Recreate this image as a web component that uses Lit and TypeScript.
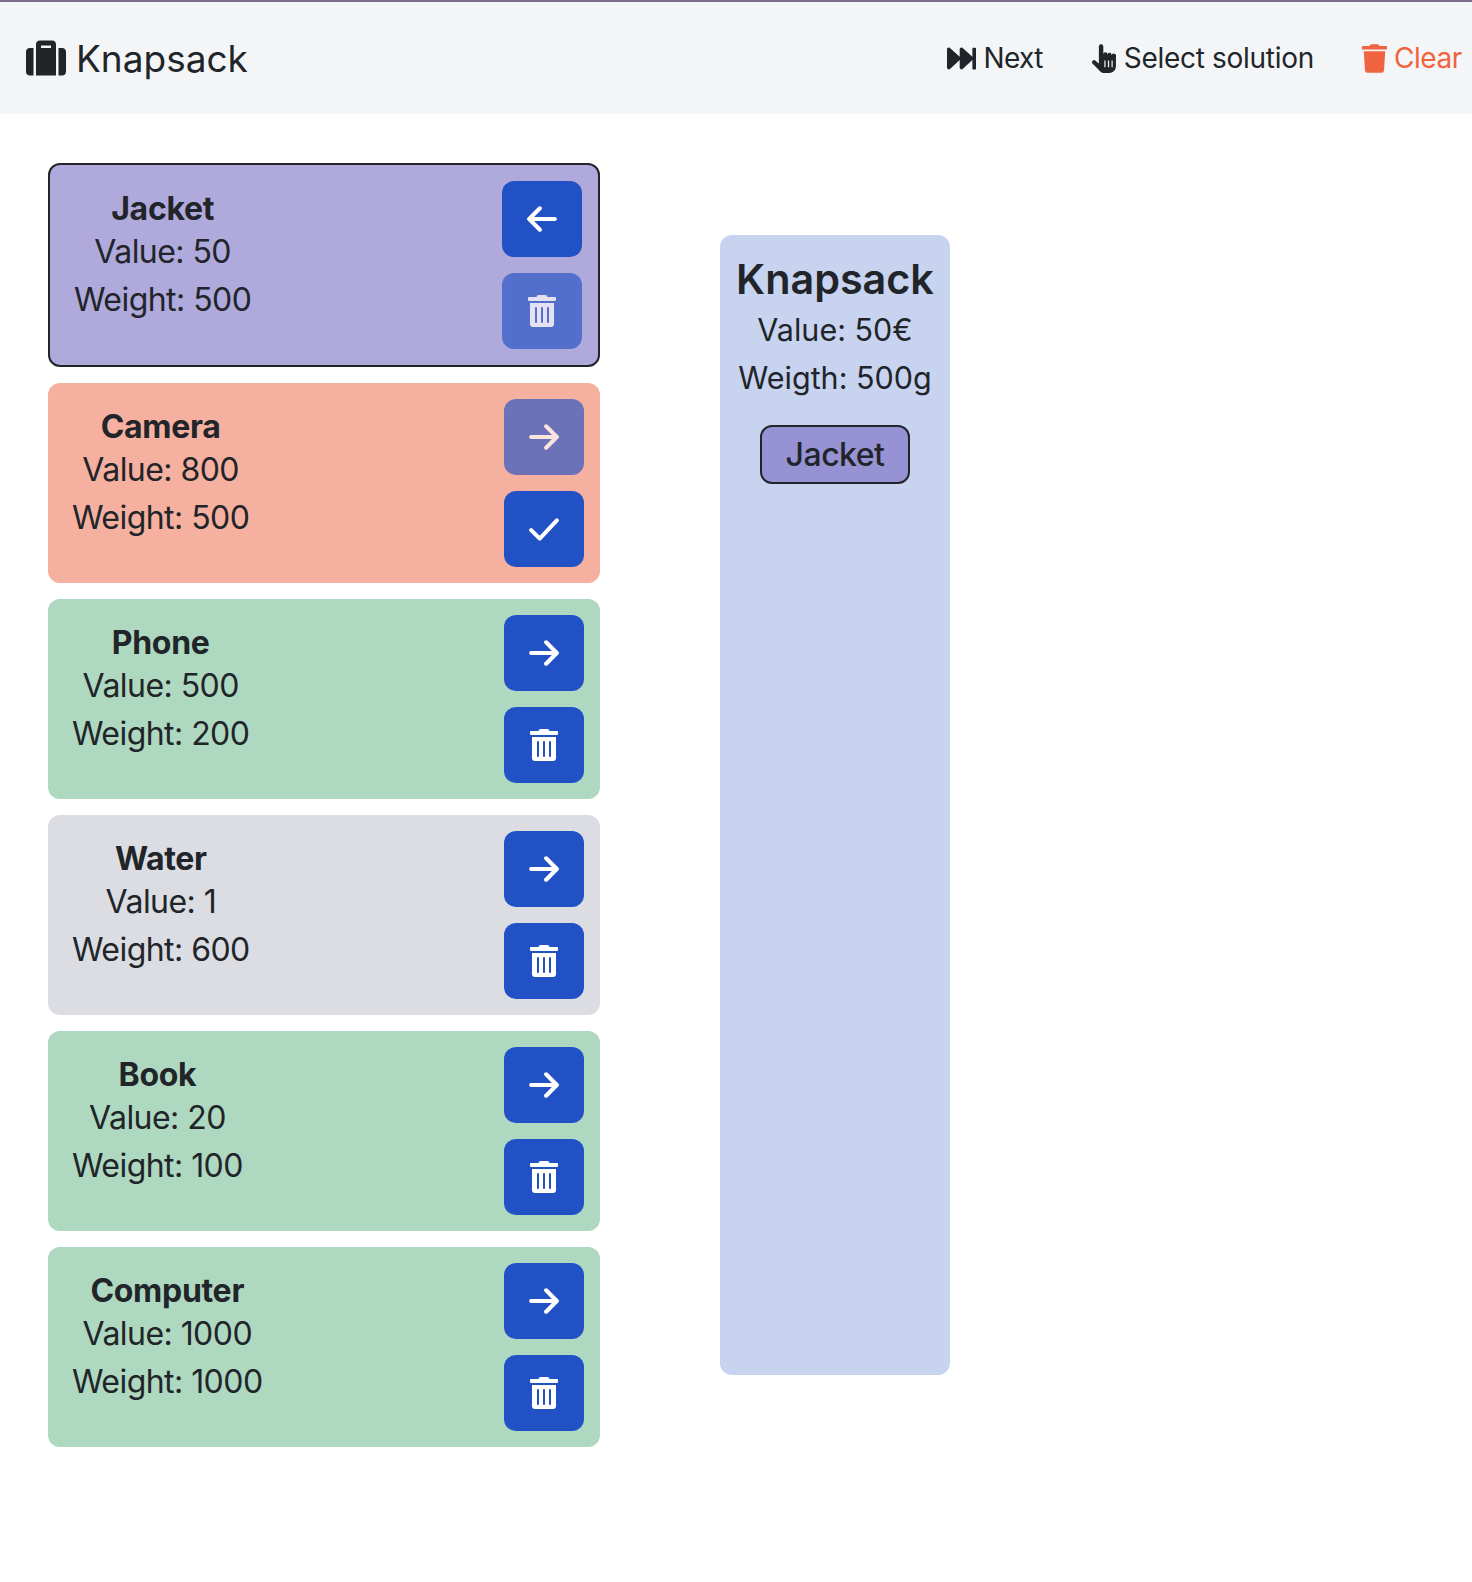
import { LitElement, html, css, svg } from "lit";
import { customElement } from "lit/decorators.js";

const icons = {
  suitcase: svg`<path d="M128 480h256V80c0-26.5-21.5-48-48-48H176c-26.5 0-48 21.5-48 48v400zm64-384h128v32H192V96zm320 80v256c0 26.5-21.5 48-48 48h-48V128h48c26.5 0 48 21.5 48 48zM96 480H48c-26.5 0-48-21.5-48-48V176c0-26.5 21.5-48 48-48h48v352z"/>`,
  next: svg`<path d="M512 76v360c0 6.6-5.4 12-12 12h-40c-6.6 0-12-5.4-12-12V284.1L276.5 440.6c-20.6 17.2-52.5 2.8-52.5-24.6V284.1L52.5 440.6C31.9 457.8 0 443.4 0 416V96c0-27.4 31.9-41.7 52.5-24.6L224 226.8V96c0-27.4 31.9-41.7 52.5-24.6L448 226.8V76c0-6.6 5.4-12 12-12h40c6.6 0 12 5.4 12 12z"/>`,
  // pointing hand, redrawn from the reference: thin index finger, blob palm, three slits
  hand: svg`<path fill-rule="evenodd" d="M20 7a6.5 6.5 0 0 1 13 0V30a6 6 0 0 1 12 1a6 6 0 0 1 12 2a6.5 6.5 0 0 1 13 4V64a20 20 0 0 1-20 21H34a12 12 0 0 1-9-4L2 58a6 6 0 0 1 8-9L20 57ZM36 48v20h3.500V48ZM46.500 48v20H50V48ZM57 48v20h3.500V48Z"/>`,
  trash: svg`<path d="M432 32H312l-9.4-18.7A24 24 0 0 0 281.1 0H166.8a23.72 23.72 0 0 0-21.4 13.3L136 32H16A16 16 0 0 0 0 48v32a16 16 0 0 0 16 16h416a16 16 0 0 0 16-16V48a16 16 0 0 0-16-16zM53.2 467a48 48 0 0 0 47.9 45h245.8a48 48 0 0 0 47.9-45L416 128H32z"/>`,
  trashLines: svg`<path d="M32 464a48 48 0 0 0 48 48h288a48 48 0 0 0 48-48V128H32zm272-256a16 16 0 0 1 32 0v224a16 16 0 0 1-32 0zm-96 0a16 16 0 0 1 32 0v224a16 16 0 0 1-32 0zm-96 0a16 16 0 0 1 32 0v224a16 16 0 0 1-32 0zM432 32H312l-9.4-18.7A24 24 0 0 0 281.1 0H166.8a23.72 23.72 0 0 0-21.4 13.3L136 32H16A16 16 0 0 0 0 48v32a16 16 0 0 0 16 16h416a16 16 0 0 0 16-16V48a16 16 0 0 0-16-16z"/>`,
};

const arrowRight = html`<svg class="stroke" viewBox="0 0 28 24"><path d="M2 12h24M16 2l10 10-10 10" /></svg>`;
const arrowLeft = html`<svg class="stroke" viewBox="0 0 28 24"><path d="M26 12H2M12 2 2 12l10 10" /></svg>`;
const check = html`<svg class="stroke" viewBox="0 0 28 24"><path d="M2 13l8 8L26 4" /></svg>`;
const trashBtn = html`<svg class="trash" viewBox="0 0 448 512">${icons.trashLines}</svg>`;

interface Item {
  name: string;
  value: number;
  weight: number;
  state: "picked" | "wrong" | "good" | "neutral";
}

const items: Item[] = [
  { name: "Jacket", value: 50, weight: 500, state: "picked" },
  { name: "Camera", value: 800, weight: 500, state: "wrong" },
  { name: "Phone", value: 500, weight: 200, state: "good" },
  { name: "Water", value: 1, weight: 600, state: "neutral" },
  { name: "Book", value: 20, weight: 100, state: "good" },
  { name: "Computer", value: 1000, weight: 1000, state: "good" },
];

@customElement("app-root")
export class AppRoot extends LitElement {
  static styles = css`
    :host {
      display: block;
      font-family: Inter, "Liberation Sans", sans-serif;
      color: #212529;
      background: #fff;
      min-height: 1582px;
    }
    .topline {
      height: 2px;
      background: #7b6d8b;
    }
    nav {
      height: 112px;
      background: #f4f5f7;
      display: flex;
      align-items: center;
      padding: 0 10px 0 26px;
    }
    .brand {
      display: flex;
      align-items: center;
      gap: 10px;
      font-size: 37px;
      flex: 1;
    }
    .brand svg {
      width: 40px;
      height: 40px;
      fill: #212529;
    }
    .links {
      display: flex;
      align-items: center;
      gap: 48px;
    }
    .link {
      display: flex;
      align-items: center;
      gap: 7px;
      font-size: 28px;
      letter-spacing: -0.3px;
    }
    .link svg {
      height: 29px;
      fill: currentColor;
    }
    .link.next {
      letter-spacing: -0.6px;
    }
    .link.next svg {
      width: 29px;
    }
    .link.hand {
      gap: 8px;
      margin-left: 1px;
    }
    .link.hand svg {
      width: 24px;
    }
    .link.clear svg {
      width: 25px;
    }
    .link.clear {
      color: #f0633f;
      letter-spacing: -0.4px;
    }
    main {
      display: flex;
      align-items: flex-start;
      padding: 49px 0 0 48px;
    }
    .list {
      width: 552px;
      display: flex;
      flex-direction: column;
      gap: 16px;
    }
    .card {
      display: flex;
      justify-content: space-between;
      align-items: flex-start;
      height: 200px;
      box-sizing: border-box;
      padding: 16px;
      border-radius: 12px;
    }
    .card.good {
      background: #afd8c1;
    }
    .card.neutral {
      background: #dcdde3;
    }
    .card.wrong {
      background: #f6b0a0;
    }
    .card.picked {
      background: #b0a9dc;
      border: 2px solid #212529;
      height: 204px;
    }
    .info {
      padding: 9px 0 0 8px;
      text-align: center;
      font-size: 32px;
      letter-spacing: -0.55px;
    }
    .info h3 {
      margin: 0;
      font-size: 32px;
      line-height: 1.2;
      font-weight: 700;
      letter-spacing: -0.3px;
    }
    .info div {
      line-height: 47.5px;
    }
    .actions {
      display: flex;
      flex-direction: column;
      gap: 16px;
    }
    .btn {
      width: 80px;
      height: 76px;
      border-radius: 12px;
      background: #2251c5;
      display: flex;
      align-items: center;
      justify-content: center;
    }
    .btn.off {
      opacity: 0.65;
    }
    .stroke {
      width: 30px;
      height: 26px;
      fill: none;
      stroke: #fff;
      stroke-width: 3.8;
      stroke-linecap: round;
      stroke-linejoin: round;
    }
    .trash {
      width: 28px;
      height: 32px;
      fill: #fff;
    }
    .panel {
      width: 230px;
      height: 1140px;
      box-sizing: border-box;
      margin: 72px 0 0 120px;
      padding: 18px 16px 16px;
      border-radius: 12px;
      background: #c8d3f0;
      text-align: center;
      font-size: 30.5px;
    }
    .panel h2 {
      margin: 0;
      font-size: 41.3px;
      line-height: 53px;
      font-weight: 600;
    }
    .panel .line {
      line-height: 47.5px;
    }
    .chip {
      display: inline-block;
      margin-top: 24px;
      width: 150px;
      height: 59px;
      line-height: 56px;
      box-sizing: border-box;
      border: 2px solid #212529;
      border-radius: 12px;
      background: #9692d3;
      font-size: 32px;
      font-weight: 500;
      letter-spacing: -0.5px;
    }
  `;

  private renderCard(item: Item) {
    const isPicked = item.state === "picked";
    return html`
      <div class="card ${item.state}">
        <div class="info">
          <h3>${item.name}</h3>
          <div>Value: ${item.value}</div>
          <div>Weight: ${item.weight}</div>
        </div>
        <div class="actions">
          <div class="btn ${item.state === "wrong" ? "off" : ""}">
            ${isPicked ? arrowLeft : arrowRight}
          </div>
          <div class="btn ${isPicked ? "off" : ""}">
            ${item.state === "wrong" ? check : trashBtn}
          </div>
        </div>
      </div>
    `;
  }

  render() {
    return html`
      <div class="topline"></div>
      <nav>
        <div class="brand">
          <svg viewBox="0 0 512 512">${icons.suitcase}</svg>
          Knapsack
        </div>
        <div class="links">
          <div class="link next"><svg viewBox="0 0 512 512">${icons.next}</svg>Next</div>
          <div class="link hand"><svg viewBox="0 0 70 85">${icons.hand}</svg>Select solution</div>
          <div class="link clear"><svg viewBox="0 0 448 512">${icons.trash}</svg>Clear</div>
        </div>
      </nav>
      <main>
        <div class="list">${items.map((i) => this.renderCard(i))}</div>
        <div class="panel">
          <h2>Knapsack</h2>
          <div class="line">Value: 50€</div>
          <div class="line">Weigth: 500g</div>
          <div class="chip">Jacket</div>
        </div>
      </main>
    `;
  }
}
